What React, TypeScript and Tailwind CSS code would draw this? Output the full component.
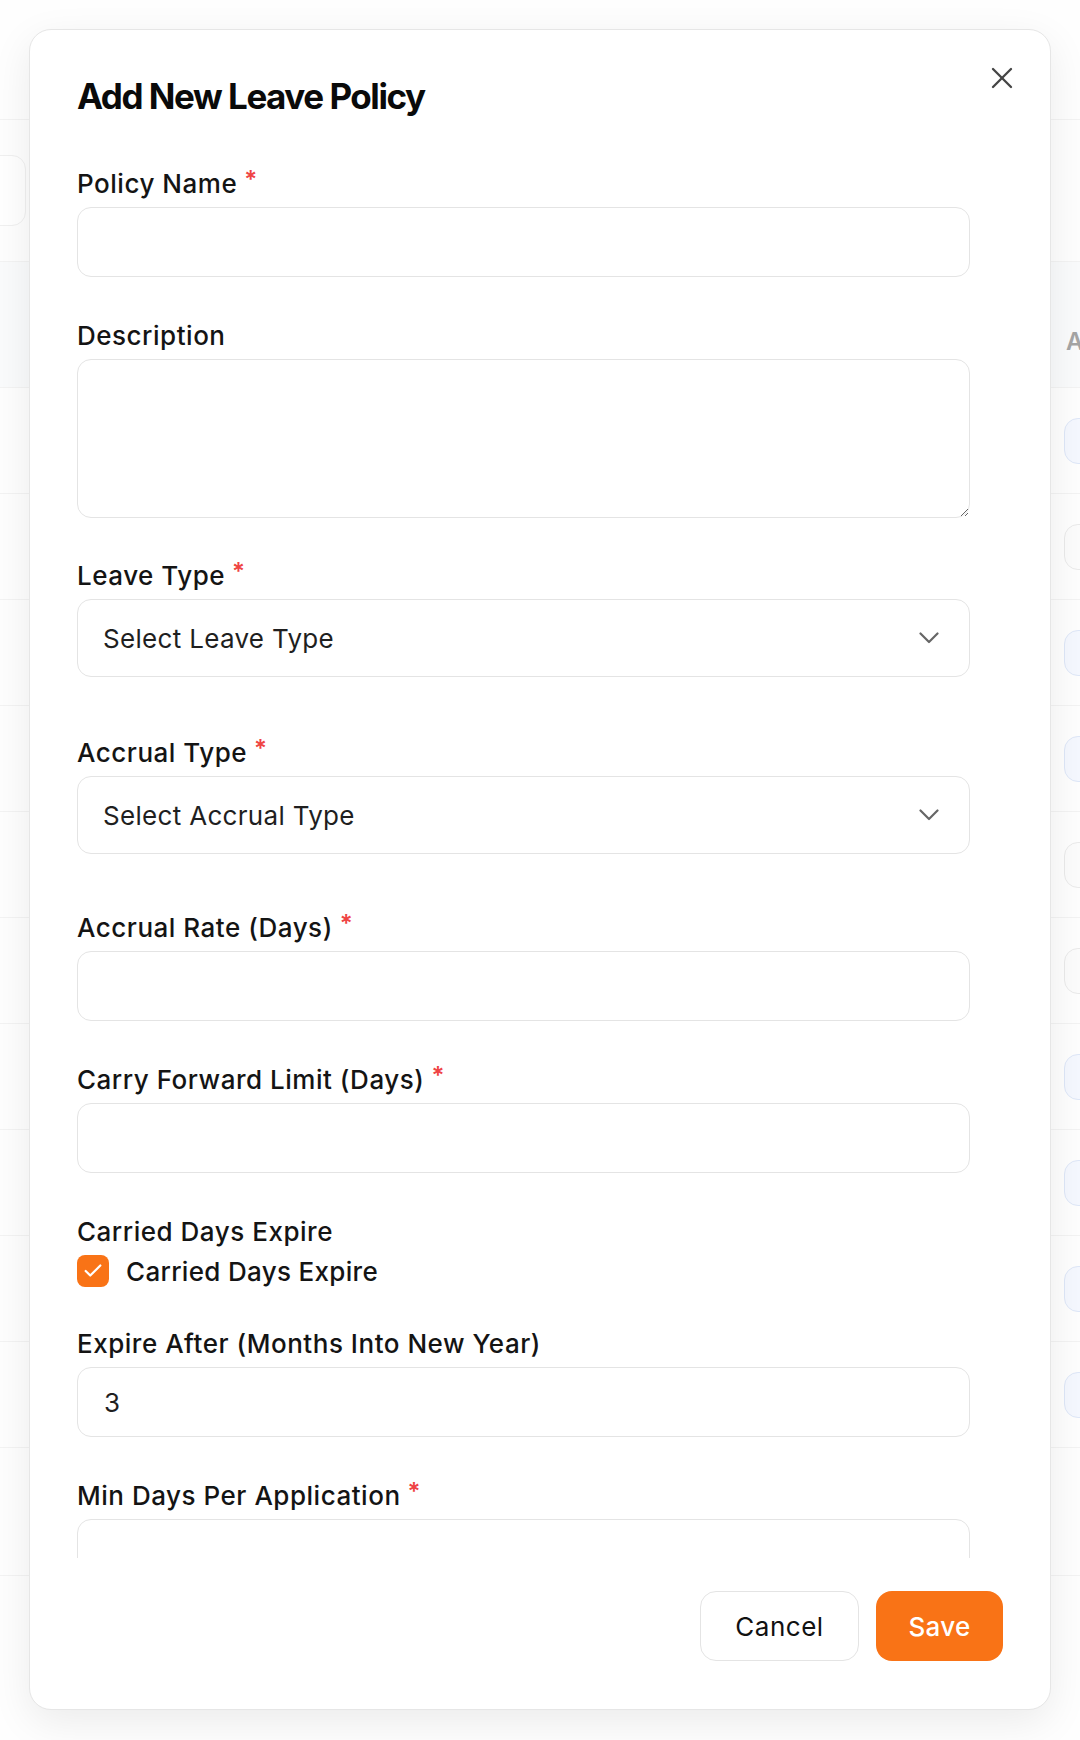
import { Check } from "lucide-react";

const font = { fontFamily: "Inter, 'Noto Sans', sans-serif" };

function Label({ text, required }: { text: string; required?: boolean }) {
  return (
    <p className="flex h-[32px] items-center text-[26px] font-medium leading-[32px] tracking-[0.02em] text-[#141414]">
      {text}
      {required && (
        <span className="ml-[7px] self-start text-[24px] font-semibold leading-[24px] text-[#ef4444]">*</span>
      )}
    </p>
  );
}

function TextField({ label, required, value, className }: { label: string; required?: boolean; value?: string; className?: string }) {
  return (
    <div className={"flex flex-col gap-[7px] " + (className ?? "")}>
      <Label text={label} required={required} />
      <input
        readOnly
        value={value ?? ""}
        className="h-[70px] w-full shrink-0 rounded-[14px] border-[1.5px] border-[#e4e4e4] bg-white px-[26px] text-[26px] tracking-[0.01em] text-[#1f1f1f] outline-none"
      />
    </div>
  );
}

function SelectField({ label, placeholder, className }: { label: string; placeholder: string; className?: string }) {
  return (
    <div className={"flex flex-col gap-[7px] " + (className ?? "")}>
      <Label text={label} required />
      <div className="flex h-[78px] w-full items-center justify-between rounded-[14px] border-[1.5px] border-[#e4e4e4] bg-white pl-[25px] pr-[30px]">
        <span className="text-[26px] tracking-[0.012em] text-[#1f1f1f]">{placeholder}</span>
        <svg width="20" height="12" viewBox="0 0 20 12" fill="none" stroke="#666666" strokeWidth="2.2" strokeLinecap="round" strokeLinejoin="round">
          <polyline points="1.5,1.5 10,10 18.5,1.5" />
        </svg>
      </div>
    </div>
  );
}

// faded page that sits behind the dialog
function BackgroundPage() {
  const rows = ["blue", "gray", "blue", "blue", "gray", "gray", "blue", "blue", "blue", "blue"];
  return (
    <div className="flex flex-col">
      <div className="h-[120px] border-b border-[#ececec]" />
      <div className="flex h-[142px] items-center border-b border-[#ececec]">
        <div className="-ml-[20px] h-[71px] w-[46px] rounded-[14px] border border-[#e6e6e6] bg-white" />
      </div>
      <div className="flex h-[126px] items-end justify-end border-b border-[#ececec] bg-[#f7f8fa] pb-[30px]">
        <span className="w-[14px] overflow-hidden text-[24px] font-semibold leading-[30px] text-[#6a6a6a]">A</span>
      </div>
      {rows.map((kind, i) => (
        <div key={i} className="flex h-[106px] items-center justify-end border-b border-[#ececec]">
          <div
            className={
              kind === "blue"
                ? "-mr-[20px] h-[46px] w-[36px] rounded-[14px] border-[1.5px] border-[#c9d7f4] bg-[#eef4ff]"
                : "-mr-[20px] h-[46px] w-[36px] rounded-[14px] border-[1.5px] border-[#dcdcdc] bg-[#fbfbfb]"
            }
          />
        </div>
      ))}
      <div className="h-[128px] border-b border-[#ececec]" />
    </div>
  );
}

export default function App() {
  return (
    <div className="relative h-[1740px] w-[1080px] overflow-hidden bg-[#fdfdfd]" style={font}>
      <BackgroundPage />
      <div className="absolute inset-0 bg-white/40" />

      {/* dialog */}
      <div className="absolute left-[29px] top-[29px] flex h-[1681px] w-[1022px] flex-col rounded-[22px] border-[1.5px] border-[#e6e6e6] bg-white shadow-[0_12px_40px_rgba(0,0,0,0.08)]">
        <button className="absolute right-[37px] top-[37px]">
          <svg width="22" height="22" viewBox="0 0 22 22" fill="none" stroke="#444444" strokeWidth="2.3" strokeLinecap="round">
            <line x1="2" y1="2" x2="20" y2="20" />
            <line x1="20" y1="2" x2="2" y2="20" />
          </svg>
        </button>

        <div className="pl-[47px] pt-[45px]">
          <h2 className="text-[35px] font-bold leading-[42px] tracking-[-0.042em] text-[#0a0a0a]">
            Add New Leave Policy
          </h2>
        </div>

        <div className="min-h-0 flex-1 overflow-hidden pl-[47px] pr-[80px] pt-[51px]">
          <TextField label="Policy Name" required />

          <div className="mt-[43px] flex flex-col gap-[7px]">
            <Label text="Description" />
            <textarea
              readOnly
              className="h-[159px] w-full rounded-[14px] border-[1.5px] border-[#e4e4e4] bg-white px-[26px] py-[18px] text-[26px] outline-none"
            />
          </div>

          <SelectField className="mt-[42px]" label="Leave Type" placeholder="Select Leave Type" />
          <SelectField className="mt-[60px]" label="Accrual Type" placeholder="Select Accrual Type" />
          <TextField className="mt-[58px]" label="Accrual Rate (Days)" required />
          <TextField className="mt-[43px]" label="Carry Forward Limit (Days)" required />

          <div className="mt-[43px] flex flex-col gap-[7px]">
            <Label text="Carried Days Expire" />
            <label className="flex h-[32px] items-center gap-[17px]">
              <span className="flex h-[32px] w-[32px] items-center justify-center rounded-[8px] bg-[#f97316]">
                <Check className="h-[22px] w-[22px] text-white" strokeWidth={2.4} />
              </span>
              <span className="text-[26px] font-medium tracking-[0.012em] text-[#141414]">Carried Days Expire</span>
            </label>
          </div>

          <TextField className="mt-[41px]" label="Expire After (Months Into New Year)" value="3" />
          <TextField className="mt-[43px]" label="Min Days Per Application" required />
        </div>

        <div className="flex justify-end gap-[17px] pb-[48px] pr-[47px] pt-[33px]">
          <button className="h-[70px] w-[159px] rounded-[16px] border-[1.5px] border-[#e4e4e4] bg-white text-[26px] tracking-[0.02em] text-[#111111]">
            Cancel
          </button>
          <button className="h-[70px] w-[127px] rounded-[16px] bg-[#f97316] text-[26px] font-medium tracking-[0.01em] text-white">
            Save
          </button>
        </div>
      </div>
    </div>
  );
}
